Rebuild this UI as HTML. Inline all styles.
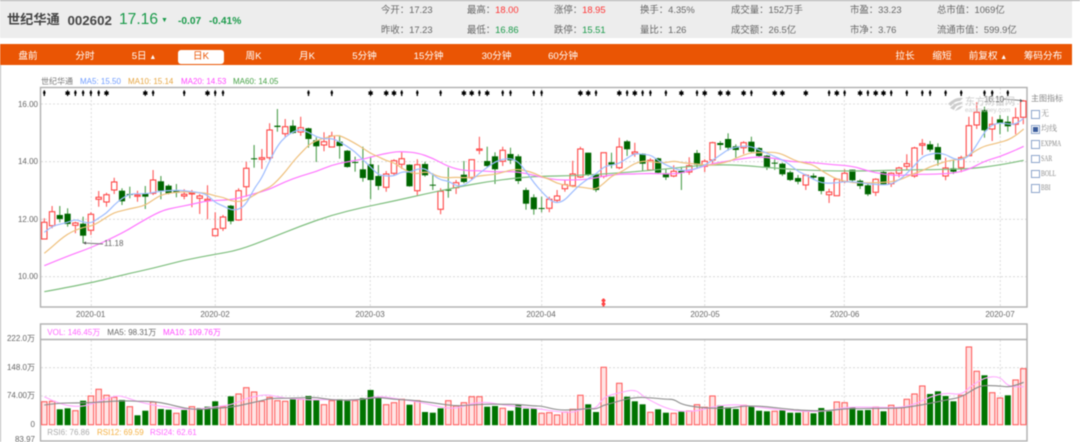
<!DOCTYPE html>
<html lang="zh">
<head>
<meta charset="utf-8">
<title>世纪华通 002602</title>
<style>
html,body{margin:0;padding:0;background:#fff}
#p{position:relative;width:1080px;height:442px;overflow:hidden;background:#fff;font-family:"Liberation Sans","Noto Sans CJK SC",sans-serif;filter:blur(.42px)}
.t{position:absolute;white-space:nowrap;line-height:12px;height:12px}
.c{transform:translateX(-50%)}
.r{transform:translateX(-100%)}
.h{font-size:9.4px;color:#666}
.red{color:#f33}.grn{color:#1a9a4a}
.n{font-size:9.6px;color:#fff;top:51px}
.m{font-size:8px}
.a{font-size:8px;color:#666}
.cb{position:absolute;left:1031px;width:6.5px;height:6.5px;border:1px solid #8ea6cc;background:#fff}
.s{font-family:"Liberation Serif","Noto Serif CJK SC",serif;font-size:8px;color:#888;left:1041px}
.l{transform:scaleX(.72);transform-origin:left center}
svg{position:absolute;left:0;top:0}
</style>
</head>
<body>
<div id="p">
<div style="position:absolute;left:0;top:0;width:1072px;height:38px;background:#ededed"></div>
<div style="position:absolute;left:0;top:0;width:1080px;height:1px;background:#aaa"></div>
<div style="position:absolute;left:0;top:44px;width:1072px;height:21px;background:#ea5504"></div>
<div style="position:absolute;left:0;top:65px;width:1px;height:377px;background:#bbb"></div>

<span class="t" style="left:7px;top:13.8px;font-size:13.2px;font-weight:bold;color:#444">世纪华通</span>
<span class="t" style="left:67.5px;top:14.5px;font-size:13.3px;font-weight:bold;color:#444">002602</span>
<span class="t grn" style="left:119px;top:13.5px;font-size:15.6px">17.16</span>
<span class="t grn" style="left:161px;top:15px;font-size:7px">▼</span>
<span class="t grn" style="left:178px;top:15.5px;font-size:10.2px;font-weight:bold">-0.07</span>
<span class="t grn" style="left:209px;top:15.5px;font-size:10.2px;font-weight:bold">-0.41%</span>

<span class="t h" style="left:381px;top:4px">今开：17.23</span>
<span class="t h" style="left:381px;top:24px">昨收：17.23</span>
<span class="t h" style="left:467px;top:4px">最高：<span class="red">18.00</span></span>
<span class="t h" style="left:467px;top:24px">最低：<span class="grn">16.86</span></span>
<span class="t h" style="left:554px;top:4px">涨停：<span class="red">18.95</span></span>
<span class="t h" style="left:554px;top:24px">跌停：<span class="grn">15.51</span></span>
<span class="t h" style="left:640px;top:4px">换手：4.35%</span>
<span class="t h" style="left:640px;top:24px">量比：1.26</span>
<span class="t h" style="left:731px;top:4px">成交量：152万手</span>
<span class="t h" style="left:731px;top:24px">成交额：26.5亿</span>
<span class="t h" style="left:850px;top:4px">市盈：33.23</span>
<span class="t h" style="left:850px;top:24px">市净：3.76</span>
<span class="t h" style="left:937px;top:4px">总市值：1069亿</span>
<span class="t h" style="left:937px;top:24px">流通市值：599.9亿</span>

<div style="position:absolute;left:178px;top:50px;width:46px;height:14px;background:#fff;border-radius:3px"></div>
<span class="t n c" style="left:28px">盘前</span>
<span class="t n c" style="left:85px">分时</span>
<span class="t n c" style="left:144px">5日 <span style="font-size:7px">▲</span></span>
<span class="t n c" style="left:201px;color:#ea5504">日K</span>
<span class="t n c" style="left:253.5px">周K</span>
<span class="t n c" style="left:307px">月K</span>
<span class="t n c" style="left:364.5px">5分钟</span>
<span class="t n c" style="left:428.6px">15分钟</span>
<span class="t n c" style="left:496.5px">30分钟</span>
<span class="t n c" style="left:563px">60分钟</span>
<span class="t n c" style="left:905px">拉长</span>
<span class="t n c" style="left:942px">缩短</span>
<span class="t n c" style="left:988px">前复权 <span style="font-size:7px">▲</span></span>
<span class="t n c" style="left:1043px">筹码分布</span>

<span class="t m" style="left:41px;top:76px;color:#777">世纪华通</span>
<span class="t m" style="left:80px;top:76px;color:#6f9cff">MA5: 15.50</span>
<span class="t m" style="left:128px;top:76px;color:#e6a540">MA10: 15.14</span>
<span class="t m" style="left:181px;top:76px;color:#ff44ff">MA20: 14.53</span>
<span class="t m" style="left:233px;top:76px;color:#44a044">MA60: 14.05</span>

<svg id="g" width="1080" height="442" viewBox="0 0 1080 442" xmlns="http://www.w3.org/2000/svg"></svg>

<span class="t a r" style="left:38px;top:98.5px">16.00</span>
<span class="t a r" style="left:38px;top:156.2px">14.00</span>
<span class="t a r" style="left:38px;top:213.8px">12.00</span>
<span class="t a r" style="left:38px;top:271.2px">10.00</span>
<span class="t a" style="left:104px;top:238.3px">11.18</span>
<span class="t a" style="left:984px;top:93.7px;color:#444">16.10</span>
<span class="t" style="left:965px;top:97px;font-size:10px;color:#ccc">东方财富网</span>
<span class="t" style="left:965px;top:105px;font-size:6.5px;color:#ccc">eastmoney.com</span>

<span class="t a c" style="left:90.7px;top:309.3px">2020-01</span>
<span class="t a c" style="left:215px;top:309.3px">2020-02</span>
<span class="t a c" style="left:370px;top:309.3px">2020-03</span>
<span class="t a c" style="left:541px;top:309.3px">2020-04</span>
<span class="t a c" style="left:705px;top:309.3px">2020-05</span>
<span class="t a c" style="left:844.7px;top:309.3px">2020-06</span>
<span class="t a c" style="left:1000px;top:309.3px">2020-07</span>

<span class="t a r" style="left:35px;top:333px">222.0万</span>
<span class="t a r" style="left:35px;top:361.7px">148.0万</span>
<span class="t a r" style="left:35px;top:390px">74.00万</span>
<span class="t a r" style="left:35px;top:418.7px">0</span>
<span class="t a r" style="left:35px;top:433.5px">83.97</span>

<span class="t m" style="left:47.3px;top:326.7px;color:#ff66ff">VOL: 146.45万</span>
<span class="t m" style="left:107.3px;top:326.7px;color:#666">MA5: 98.31万</span>
<span class="t m" style="left:163px;top:326.7px;color:#ff44ff">MA10: 109.76万</span>
<span class="t m" style="left:47.3px;top:427px;color:#aaa">RSI6: 76.86</span>
<span class="t m" style="left:97px;top:427px;color:#f5b041">RSI12: 69.59</span>
<span class="t m" style="left:150px;top:427px;color:#ff66ff">RSI24: 62.61</span>

<span class="t" style="left:1031px;top:92.7px;font-size:8px;color:#888">主图指标</span>
<div class="cb" style="top:110px"></div><span class="t s" style="top:108px">无</span>
<div class="cb" style="top:125px"></div><div style="position:absolute;left:1033px;top:127px;width:4.5px;height:4.5px;background:#3a5c9c"></div><span class="t s" style="top:123px">均线</span>
<div class="cb" style="top:140px"></div><span class="t s l" style="top:138px">EXPMA</span>
<div class="cb" style="top:154.7px"></div><span class="t s l" style="top:152.7px">SAR</span>
<div class="cb" style="top:169.7px"></div><span class="t s l" style="top:167.7px">BOLL</span>
<div class="cb" style="top:184.3px"></div><span class="t s l" style="top:182.3px">BBI</span>
</div>
<script>
(function(){
var X=function(i){return 44.3+7.77*i};
// candle: type, wick top, body top, body bottom, wick bottom (zoom coords, origin y=100)
var C=[
"r355,367,417,418","r318,335,377,385","g318,345,357,367","g325,341,372,380","r365,369,376,400","g350,371,407,430","r337,343,391,405","r273,292,298,320","r278,284,306,320","r233,246,270,282",
"g265,272,304,315","g260,282,284,295","r272,285,289,305","g258,281,290,327","r210,240,280,285","g228,244,272,298","g253,257,280,283","g252,273,278,292","r268,283,288,298","r270,279,282,322",
"r282,288,295,342","r256,298,302,358","r337,387,407,407","r345,351,385,393","g315,317,364,373","r265,272,360,362","r185,205,260,290","g135,175,177,203","r147,173,178,207","r70,90,173,180",
"g27,77,81,95","r57,80,101,110","g60,77,99,101","r50,83,96,107","g83,85,117,143","g112,121,139,186","r97,125,135,154","r95,108,141,142","g106,125,138,176","g150,152,201,203",
"g170,186,188,215","g140,208,234,245","g172,193,240,298","g195,228,258,270","r213,222,262,275","r178,182,220,228","r155,176,193,207","g193,194,259,260","r178,194,272,287","g185,192,226,230",
"g220,254,256,270","r265,274,328,343","g202,269,272,293","r240,248,263,282","g183,224,246,250","r178,179,233,240","r110,147,151,163","g140,183,198,202","g157,169,208,252","r140,151,184,198",
"g143,162,181,192","g163,169,243,252","g263,270,311,329","g283,292,328,344",
"g290,324,326,337","r290,298,325,337","r270,288,301,308","r240,254,266,275","r182,222,257,262","r140,147,231,234","g158,158,224,228","g222,222,270,276","r158,158,229,235","g158,187,194,205",
"r113,141,203,208","g120,124,148,168","r128,156,161,170","g160,161,191,212","r175,181,210,212","g173,175,218,220","g208,220,232,240","r196,214,228,232","g200,213,219,270","r172,197,216,224",
"g150,159,194,205","r178,184,199,216","r125,128,180,193","g123,129,135,150","g100,117,143,152","g133,139,150,173","r124,128,143,162","g110,125,155,157","g142,144,168,170","g165,167,201,210",
"g178,188,191,210","g188,191,223,228","g212,217,240,243","g225,234,245,253","r222,226,255,270"];
var C2=["g265,272,278,285","g275,276,318,328","r311,321,329,354","r280,283,332,333","r253,265,290,295","g254,254,286,290","g283,287,303,312","g297,301,328,333","r280,283,322,333","g258,261,298,300",
"r262,265,296,306","r245,249,265,277","r208,236,244,255","r185,189,273,278","r162,176,181,210","g168,178,194,200","g175,186,224,242","r218,249,273,286","g226,250,260,267","r212,218,248,262",
"r95,122,212,214","r52,82,120,132","g65,75,136,158","r95,118,132,168","g90,103,115,148","g93,110,124,140","r68,98,118,148","r45,48,97,118"];
var Y=function(z){return 100+z/3};
var Y2=function(z){return 85+z/3};
var f=function(n){return Math.round(n*10)/10};
var out=[];
function ln(a,b,c,d,col,w,dash){out.push('<line x1="'+a+'" y1="'+b+'" x2="'+c+'" y2="'+d+'" stroke="'+col+'" stroke-width="'+w+'"'+(dash?' stroke-dasharray="'+dash+'"':'')+'/>')}
[104,161.7,219.3,276.7,367.7,396].forEach(function(y){ln(41,y,1027,y,'#d4d4d4',.8,'2 2')});
[91.3,215.3,370.3,541.7,704.7,844.3,1000.3].forEach(function(x){ln(x,88,x,307,'#d4d4d4',.8,'2 2');ln(x,340,x,424,'#d4d4d4',.8,'2 2')});
out.push('<rect x="40.5" y="87.5" width="986.5" height="219.5" fill="none" stroke="#b0b0b0" stroke-width="1.4"/>');
out.push('<rect x="40.5" y="324" width="986.5" height="117" fill="none" stroke="#b0b0b0" stroke-width="1.4"/>');
ln(40.5,339.5,1027,339.5,'#b0b0b0',1.4);
// marks
var stars={3:1,8:1,13:1,21:1,42:1,44:1,45:1,54:1,55:1,57:1,69:1,70:1,74:1,76:1,82:1,85:1,87:1,88:1,90:1,94:1,95:1,98:1,102:1,105:1,107:1,108:1};
[0,3,4,5,6,7,8,13,14,18,21,22,23,34,37,42,44,45,46,48,51,54,55,56,57,59,60,63,64,69,70,71,74,75,76,77,78,80,82,84,85,87,88,90,91,94,95,98,101,102,103,105,106,107,108,109,111,113,114,116,118,121,122,124].forEach(function(i){
 var x=f(X(i));
 if(stars[i]){
  out.push('<path d="M'+x+' 90.3V96M'+f(x-2.2)+' 91.9L'+f(x+2.2)+' 94.3M'+f(x-2.2)+' 94.3L'+f(x+2.2)+' 91.9" stroke="#000" stroke-width="1.2"/>');
  out.push('<circle cx="'+x+'" cy="93.1" r="1.7" fill="#000"/>');
 }else{
  out.push('<path d="M'+x+' 90.3V96" stroke="#000" stroke-width="1.3"/>');
  out.push('<rect x="'+f(x-1.2)+'" y="91.6" width="2.4" height="2.2" fill="#000"/>');
 }
});
// watermark fan
out.push('<path d="M948 104C953 99 958 97 963 98L960 101C956 101 953 103 951 106ZM950 108C954 104 958 102 963 102L960 105C957 105 955 107 954 110ZM955 111C957 108 959 106 963 106L960 109Z" fill="#ccc"/>');
function path(segs){var p=[];segs.forEach(function(s){var ox=s[0],oy=s[1],a=s[2];for(var i=0;i<a.length;i+=2)p.push([ox+a[i]/3,oy+a[i+1]/3])});
 var d='M'+f(p[0][0])+' '+f(p[0][1]);
 for(var i=1;i<p.length-1;i++){var mx=(p[i][0]+p[i+1][0])/2,my=(p[i][1]+p[i+1][1])/2;d+='Q'+f(p[i][0])+' '+f(p[i][1])+' '+f(mx)+' '+f(my)}
 d+='L'+f(p[p.length-1][0])+' '+f(p[p.length-1][1]);return d}
function pl(segs,col,w){out.push('<path d="'+path(segs)+'" fill="none" stroke="'+col+'" stroke-width="'+(w||1.1)+'" stroke-linejoin="round"/>')}
var candles=[];
C.forEach(function(s,i){candles.push([s[0],i].concat(s.slice(1).split(',').map(function(v){return Y(+v)})))});
C2.forEach(function(s,i){candles.push([s[0],i+99].concat(s.slice(1).split(',').map(function(v){return Y2(+v)})))});
candles.forEach(function(c){var x=f(X(c[1])),wt=f(c[2]),bt=f(c[3]),bb=f(c[4]),wb=f(c[5]);
 if(c[0]=='r'){
  out.push('<path d="M'+x+' '+wt+'V'+bt+'M'+x+' '+bb+'V'+wb+'" stroke="#ff5a5a" stroke-width="1.1"/>');
  out.push('<rect x="'+f(x-2.7)+'" y="'+bt+'" width="5.4" height="'+f(Math.max(bb-bt,1))+'" fill="#fff" stroke="#ff4545" stroke-width="1.1"/>');
 }else{
  out.push('<path d="M'+x+' '+wt+'V'+wb+'" stroke="#4d9f4d" stroke-width="1.1"/>');
  out.push('<rect x="'+f(x-3.1)+'" y="'+bt+'" width="6.2" height="'+f(Math.max(bb-bt,1))+'" fill="#006600"/>');
 }
});
pl([[0,100,[133,575,274,549,366,525,459,505,553,480,646,463,717,450,810,415]],[270,100,[92,378,186,345,279,322,372,303,465,282,559,262,652,245,745,233]],[540,100,[0,229,98,227,192,222,285,215,378,207,472,197,541,194,611,196,705,205]],[810,85,[0,256,81,258,174,258,268,255,361,254,478,252,570,240,641,226]]],'#7fbf7f',1.2);
pl([[0,100,[133,497,203,468,274,443,366,400,412,372,483,332,529,322,576,313,622,302,693,300,739,288,785,275]],[270,100,[0,267,46,245,92,228,138,215,186,195,233,185,279,178,325,165,372,156,396,155,442,158,489,175,535,200,581,212,628,212,676,216,722,214,769,220]],[540,100,[5,232,51,240,98,240,146,238,192,228,239,222,285,222,332,220,378,222,424,220,472,205,519,190,565,183,611,175,658,170,705,175,751,185]],[810,85,[0,232,57,238,127,243,174,258,221,268,268,272,315,268,361,268,431,265,478,253,524,228,570,215,617,195,641,184]]],'#ff77ff',1.2);
pl([[0,100,[133,460,157,440,179,420,203,402,227,390,250,382,274,378,295,368,319,352,342,338,366,332,390,326,412,322,437,315,459,300,483,285,505,280,529,277,553,275,576,277,600,278,622,280,646,288,670,292,693,303,717,305,739,300,763,285,785,272]],[270,100,[0,262,24,240,46,215,69,185,92,160,116,135,138,122,162,115,186,108,208,106,233,118,255,130,279,145,301,160,325,170,349,182,372,188,396,205,418,217,442,222,465,215,489,222,512,232,535,233,559,232,581,233,605,232,628,228,652,225,676,223,698,217,722,210,745,208,769,212,793,220]],[540,100,[5,230,29,238,51,250,75,255,98,260,122,261,146,265,168,268,192,250,215,228,239,218,261,205,285,190,309,183,332,185,355,188,378,188,402,183,424,188,448,190,472,192,495,195,519,195,541,190,565,185,587,175,611,165,635,158,658,158,682,157,705,157,728,163,751,175,775,185,798,190]],[810,85,[10,240,34,257,57,270,81,283,104,288,127,293,151,294,174,293,198,293,221,292,244,290,268,285,291,275,315,265,337,257,361,245,383,238,407,229,431,225,454,222,478,210,500,195,524,183,546,178,570,172,594,165,617,152,641,132]]],'#efc07c',1.2);
pl([[0,100,[133,397,157,378,179,373,203,367,227,358,250,367,274,369,295,355,319,340,342,315,366,295,390,282,412,281,437,281,459,278,483,273,505,272,529,271,553,272,576,275,600,278,622,285,646,308,670,318,693,330,717,328,739,312,763,265,785,235]],[270,100,[0,180,24,135,46,110,69,95,92,88,116,97,138,110,162,117,186,115,208,125,233,140,255,155,279,180,301,200,325,225,349,228,372,228,396,215,418,217,442,207,465,205,489,225,512,240,535,243,559,258,581,257,605,240,628,220,652,202,676,185,698,178,722,175,745,185,769,215,793,250]],[540,100,[5,275,29,300,51,310,75,300,98,275,122,252,146,235,168,222,192,200,215,195,239,190,261,175,285,160,309,163,332,165,355,182,378,195,402,205,424,212,448,210,472,205,495,195,519,180,541,165,565,148,587,142,611,138,635,140,658,150,682,160,705,170,728,180,751,195,775,215,798,225]],[810,85,[10,283,34,293,57,295,81,293,104,290,127,290,151,293,174,296,198,298,221,300,244,297,268,285,291,265,315,240,337,215,361,207,383,204,407,208,431,222,454,225,478,213,500,180,524,140,546,120,570,113,594,117,617,118,641,100]]],'#9dbcff',1.2);
ln(84,243,103,244,'#777',.9);out.push('<path d="M83 243L86 241.4V244.6Z" fill="#555"/>');
ln(1004,99,1021,100.5,'#777',.9);out.push('<path d="M1023 100.7L1020 99V102.4Z" fill="#555"/>');
out.push('<path d="M603.5 298.5V306.5M601.6 300.5H605.4M601.6 304H605.4" stroke="#f44" stroke-width="2"/>');
// volume
var V=("r275 r274 g298 g295 r302 g272 r258 r238 r256 r262 g270 r290 g316 g302 r276 g297 g299 r310 g300 r290 g294 g290 g274 r290 g259 r252 r233 r246 r274 r262 "+
"r272 r274 g268 r268 g258 g270 r284 r272 g268 g269 r272 g264 g240 g262 r284 r278 r268 g284 r272 g306 g308 g295 r272 r288 r278 r260 r260 g290 g288 r295 g302 g284 g296 g296 "+
"r310 r308 r315 r306 r298 r256 g283 g306 r172 g260 r220 g260 g274 g283 r307 g298 g308 r310 g305 r303 r284 r292 r258 g286 g292 g297 r286 g290 g302 g304 r304 g301 g308 g308 r304 "+
"g310 g294 g304 r276 r278 g292 g301 g300 r291 g304 r286 r294 r268 r252 r228 g252 g244 g258 g274 r256 r111 r184 g196 r248 r264 g256 r210 r176").split(' ');
V.forEach(function(s,i){var x=X(i),t=310+(+s.slice(1))/3,b=424.7;
 if(s[0]=='r')out.push('<rect x="'+f(x-2.7)+'" y="'+f(t)+'" width="5.4" height="'+f(b-t)+'" fill="#ffe4e4" stroke="#ff5f5f" stroke-width="1.1"/>');
 else out.push('<rect x="'+f(x-3)+'" y="'+f(t)+'" width="6" height="'+f(b-t+.5)+'" fill="#007400"/>');
});
pl([[0,310,[133,260,157,272,203,288,250,290,295,275,342,258,366,258,412,275,459,285,505,292,553,298,600,297,646,290,693,285,739,265,785,255]],[270,310,[0,255,46,265,92,268,138,270,186,268,233,272,279,268,325,258,372,265,418,272,465,280,512,292,559,296,605,280,652,276,698,285,745,290,793,295]],[540,310,[5,298,51,305,98,308,122,298,146,295,168,296,192,260,239,248,285,238,309,258,332,272,378,295,424,305,472,303,519,290,565,284,611,285,658,292,705,298,751,302]],[810,310,[0,305,57,303,104,292,151,291,221,292,268,293,315,283,361,260,407,248,454,255,478,232,524,202,570,199,594,230,641,230]]],'#ffaaff',1.1);
pl([[0,310,[133,285,179,279,227,279,274,278,319,275,366,272,412,274,459,274,505,282,553,295,600,299,646,295,693,292,739,282,785,272]],[270,310,[0,265,46,265,92,263,138,262,186,270,233,270,279,268,325,262,372,268,418,270,465,275,512,282,559,288,605,285,652,282,698,283,745,283,793,288]],[540,310,[5,288,51,300,98,300,146,295,168,298,192,285,215,280,239,272,285,262,332,263,378,268,402,268,424,283,472,292,519,295,565,295,611,288,658,288,705,293,751,298,775,300]],[810,310,[0,302,57,302,104,296,151,296,198,295,268,295,315,288,361,280,407,270,454,262,500,232,524,226,570,228,594,231,617,226,641,217]]],'#8a8a8a',1.1);
document.getElementById('g').innerHTML=out.join('');
})();
</script>
</body>
</html>
